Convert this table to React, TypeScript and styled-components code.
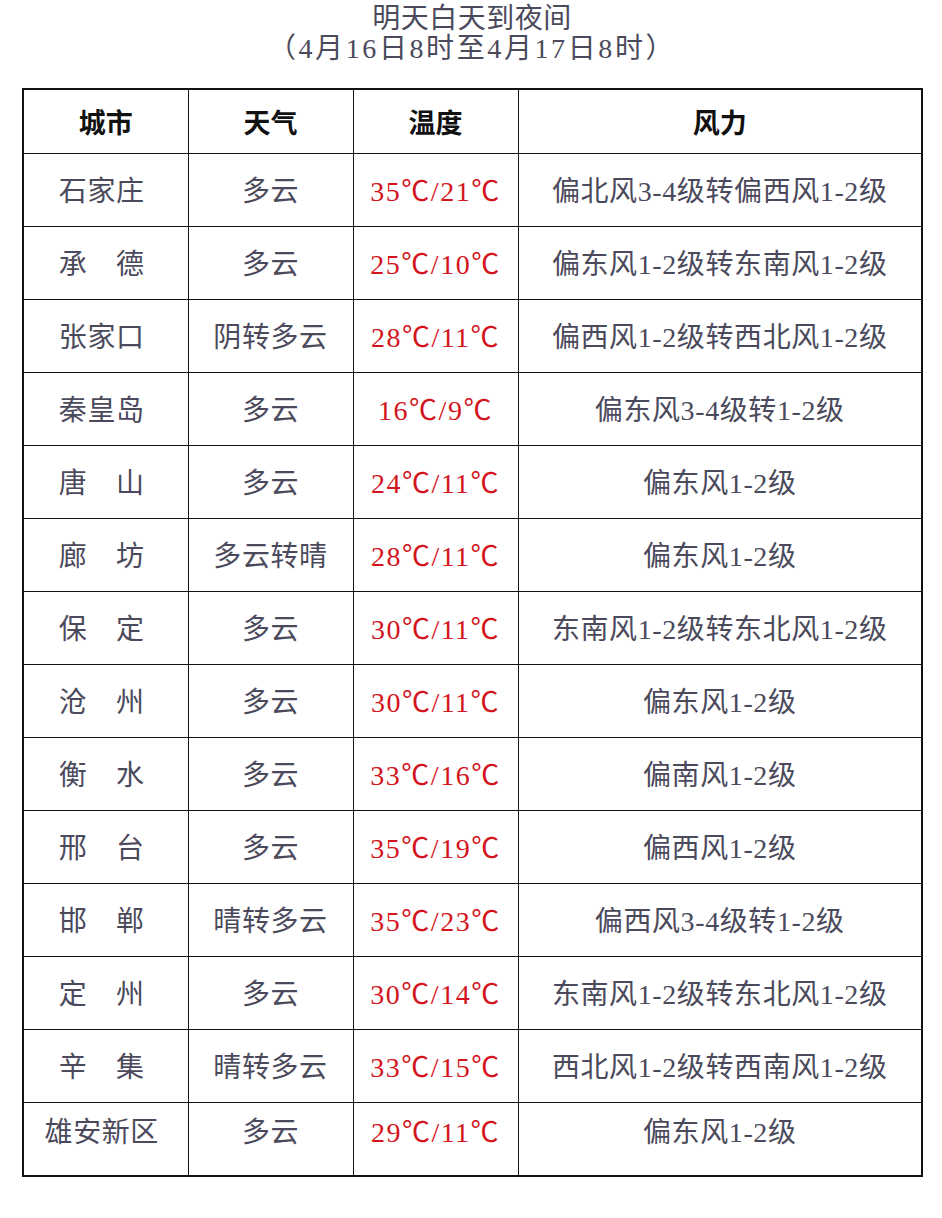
import React from "react";
import styled, { createGlobalStyle } from "styled-components";

const Global = createGlobalStyle`
  html, body { margin: 0; padding: 0; background: #ffffff; }
  body { font-family: "Liberation Serif", "Noto Sans CJK SC", serif; }
`;

const Page = styled.div`
  width: 942px;
  height: 1218px;
  padding: 4px 0 0 22px;
  box-sizing: border-box;
`;

const Title = styled.div`
  width: 900px;
  text-align: center;
  color: #4b4a5c;
  font-size: 28px;
  line-height: 30px;
  letter-spacing: 0.5px;
`;

const SubTitle = styled.span`
  letter-spacing: 2.6px;
`;

const Table = styled.table`
  margin-top: 24px;
  width: 901px;
  border-collapse: collapse;
  table-layout: fixed;
  border: 2px solid #111;
`;

const HeadCell = styled.th`
  height: 63px;
  border: 1.5px solid #111;
  font-weight: 700;
  font-size: 27px;
  color: #111;
  text-align: center;
  padding: 0;
`;

const Cell = styled.td<{ $red?: boolean; $last?: boolean; $city?: boolean }>`
  height: ${(p) => (p.$last ? "54px" : "70px")};
  border: 1.5px solid #111;
  text-align: center;
  padding: ${(p) => (p.$last ? "0 0 18px 0" : "0 0 2px 0")};
  padding-right: ${(p) => (p.$city ? "8px" : "0")};
  font-size: 28px;
  color: ${(p) => (p.$red ? "#d4141c" : "#4b4a5c")};
  white-space: nowrap;
  letter-spacing: ${(p) => (p.$red ? "1.5px" : "0.6px")};
`;

const rows: [string, string, string, string][] = [
  ["石家庄", "多云", "35℃/21℃", "偏北风3-4级转偏西风1-2级"],
  ["承　德", "多云", "25℃/10℃", "偏东风1-2级转东南风1-2级"],
  ["张家口", "阴转多云", "28℃/11℃", "偏西风1-2级转西北风1-2级"],
  ["秦皇岛", "多云", "16℃/9℃", "偏东风3-4级转1-2级"],
  ["唐　山", "多云", "24℃/11℃", "偏东风1-2级"],
  ["廊　坊", "多云转晴", "28℃/11℃", "偏东风1-2级"],
  ["保　定", "多云", "30℃/11℃", "东南风1-2级转东北风1-2级"],
  ["沧　州", "多云", "30℃/11℃", "偏东风1-2级"],
  ["衡　水", "多云", "33℃/16℃", "偏南风1-2级"],
  ["邢　台", "多云", "35℃/19℃", "偏西风1-2级"],
  ["邯　郸", "晴转多云", "35℃/23℃", "偏西风3-4级转1-2级"],
  ["定　州", "多云", "30℃/14℃", "东南风1-2级转东北风1-2级"],
  ["辛　集", "晴转多云", "33℃/15℃", "西北风1-2级转西南风1-2级"],
  ["雄安新区", "多云", "29℃/11℃", "偏东风1-2级"],
];

export default function App() {
  return (
    <Page>
      <Global />
      <Title>
        明天白天到夜间
        <br />
        <SubTitle>（4月16日8时至4月17日8时）</SubTitle>
      </Title>
      <Table>
        <colgroup>
          <col style={{ width: 165 }} />
          <col style={{ width: 165 }} />
          <col style={{ width: 165 }} />
          <col />
        </colgroup>
        <thead>
          <tr>
            <HeadCell>城市</HeadCell>
            <HeadCell>天气</HeadCell>
            <HeadCell>温度</HeadCell>
            <HeadCell>风力</HeadCell>
          </tr>
        </thead>
        <tbody>
          {rows.map((r, i) => {
            const last = i === rows.length - 1;
            return (
              <tr key={r[0]}>
                <Cell $last={last} $city>
                  {r[0]}
                </Cell>
                <Cell $last={last}>{r[1]}</Cell>
                <Cell $last={last} $red>
                  {r[2]}
                </Cell>
                <Cell $last={last}>{r[3]}</Cell>
              </tr>
            );
          })}
        </tbody>
      </Table>
    </Page>
  );
}
